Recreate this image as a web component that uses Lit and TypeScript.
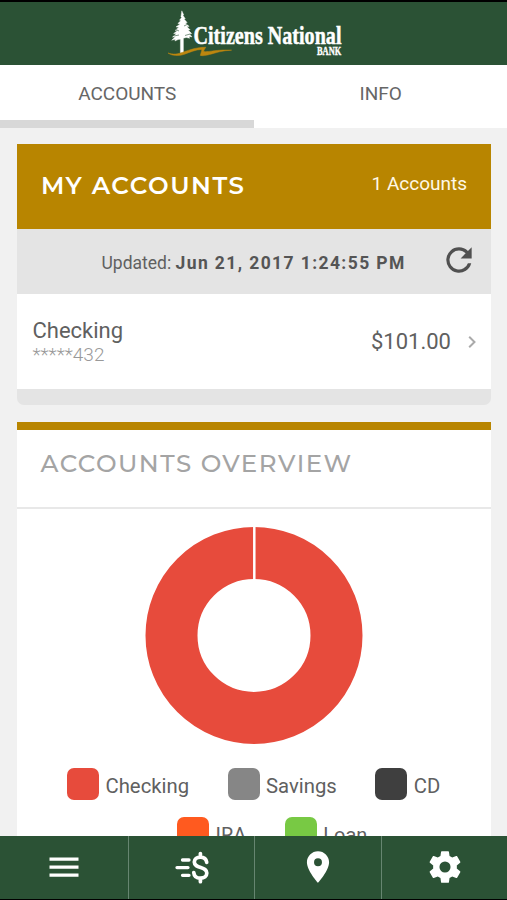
import { LitElement, html, css, svg } from "lit";
import { customElement } from "lit/decorators.js";
import { styleMap } from "lit/directives/style-map.js";

const LEGEND = [
  [
    { label: "Checking", color: "#e74b3c" },
    { label: "Savings", color: "#868686" },
    { label: "CD", color: "#3f3f3f" },
  ],
  [
    { label: "IRA", color: "#ff5a1f" },
    { label: "Loan", color: "#78c944" },
  ],
];

@customElement("bank-header")
class BankHeader extends LitElement {
  static styles = css`
    :host { display: block; height: 63px; border-top: 2px solid #000; background: #2b5235; }
    .logo { display: block; width: 190px; height: 62px; margin-left: 160px; }
    .name { font: bold 26px "Liberation Serif", serif; fill: #fff; stroke: #fff; stroke-width: 0.5px; }
    .bank { font: bold 12px "Liberation Serif", serif; fill: #fff; stroke: #fff; stroke-width: 0.4px; }
  `;
  render() {
    return html`<svg class="logo" viewBox="160 2 190 62">
      <path fill="#fff" stroke="#fff" stroke-width=".4" stroke-linejoin="round" d="M181.800 10.800l1.900 4-.8.4 2.400 3.600-1.300.2 3.200 3.600-1.700.3 3.700 3.500-2.300.2 3.300 3.300-2 .2 3.500 3.500-2.200.3 2.500 3-3-.5.600 1.900-3.300-.8-2.900.7v14.600h-3V39.200l-2.300.4-3.200 1.400.4-1.800-3.600 1 3.300-3.200-2.500.1 3.800-3.400-2.700-.1 4-3.100-2.500-.2 3.900-3-3-.4 4.100-2.900-2.300-.5 3.200-3-1.500-.3 2.300-3-.9-.2z"/>
      <path fill="none" stroke="#2b5235" stroke-width=".6" d="M175 29l4 2M188 24l-4 2M174 36l5-1M190 34l-5 1.500"/>
      <path fill="#bd860f" stroke="#bd860f" stroke-width=".5" d="M168 53c5 1.900 10 1.100 15-.8 7-2.500 14-5.100 22.800-5-1 1.700-2 3-2.200 4.400 6 .6 13-2.300 28-1.400-9 .2-16 2.700-22 4.300-4 1.100-7 1.500-9.300.9.500-2.400 1.700-4.700 1.300-6-6 .3-11.600 2.700-17 4.800-6 2.100-12.500 1.700-16.600-1.200z"/>
      <text class="name" x="193.500" y="43.500" textLength="148" lengthAdjust="spacingAndGlyphs">Citizens National</text>
      <text class="bank" x="317" y="55" textLength="24.300" lengthAdjust="spacingAndGlyphs">BANK</text>
    </svg>`;
  }
}

@customElement("section-tabs")
class SectionTabs extends LitElement {
  static styles = css`
    :host { display: flex; height: 63px; background: #fff; }
    .tab { flex: 1; box-sizing: border-box; text-align: center; padding: 17px 0 0 1px; line-height: 23px; font-size: 19px; color: #666; border-bottom: 8px solid transparent; }
    .active { border-bottom-color: #d8d8d8; }
  `;
  render() {
    return html`<div class="tab active">ACCOUNTS</div><div class="tab">INFO</div>`;
  }
}

@customElement("accounts-card")
class AccountsCard extends LitElement {
  static styles = css`
    :host { display: block; color: #606060; }
    .head { display: flex; justify-content: space-between; height: 85px; box-sizing: border-box; padding: 25px 24px 0 24px; background: #b88500; color: #fff; }
    .title { font: 600 24.500px/32px Montserrat, Lato, sans-serif; letter-spacing: 1.550px; }
    .count { font-size: 19px; line-height: 30px; color: #fff8e6; }
    .updated { display: flex; align-items: center; height: 65px; box-sizing: border-box; padding: 2px 15px 0 84.500px; background: #e4e4e4; font-size: 17.500px; white-space: pre; }
    .date { letter-spacing: 1.400px; color: #555; }
    .refresh { width: 38px; height: 38px; margin: -6px -2px 0 auto; fill: #505050; }
    .row { display: flex; align-items: center; height: 95px; box-sizing: border-box; padding: 0 14px 0 15.500px; background: #fff; }
    .name { font-size: 22px; line-height: 26px; padding-top: 1px; }
    .number { font-size: 19px; font-weight: 300; line-height: 22px; color: #999; }
    .amount { margin-left: auto; font-size: 22px; line-height: 26px; }
    .chevron { width: 8px; height: 14px; margin: 0 1px 0 17px; fill: none; stroke: #aaa; stroke-width: 2; }
    .foot { height: 16px; background: #e4e4e4; border-radius: 0 0 7px 7px; }
  `;
  render() {
    return html`
      <div class="head"><div class="title">MY ACCOUNTS</div><div class="count">1 Accounts</div></div>
      <div class="updated">
        <span>Updated: </span><b class="date">Jun 21, 2017 1:24:55 PM</b>
        <svg class="refresh" viewBox="0 0 24 24"><path d="M17.650 6.350A7.958 7.958 0 0 0 12 4a8 8 0 1 0 7.730 10h-2.080A6 6 0 1 1 12 6c1.660 0 3.140.69 4.220 1.780L13 11h7V4z"/></svg>
      </div>
      <div class="row">
        <div><div class="name">Checking</div><div class="number">*****432</div></div>
        <div class="amount">$101.00</div>
        <svg class="chevron" viewBox="0 0 8 14"><path d="M1.200 1.700L6.500 7l-5.300 5.300"/></svg>
      </div>
      <div class="foot"></div>`;
  }
}

@customElement("overview-card")
class OverviewCard extends LitElement {
  static styles = css`
    :host { display: block; border-top: 8px solid #b88500; background: #fff; color: #606060; }
    .title { height: 79px; box-sizing: border-box; padding: 17px 23.500px 0; font: 500 24.500px/32px Montserrat, Lato, sans-serif; letter-spacing: 1.500px; color: #a4a4a4; border-bottom: 2px solid #e8e8e8; }
    .donut { display: block; width: 218px; height: 218px; margin: 17px auto 24px; }
    .line { display: flex; height: 32px; margin-bottom: 17px; }
    .line.first { padding-left: 50px; }
    .line.second { padding-left: 160px; }
    .item { display: flex; align-items: center; gap: 6.500px; font-size: 20.300px; line-height: 24px; margin-right: 38.500px; }
    .second .item { font-size: 20px; margin-right: 38.500px; }
    .label { padding-top: 4px; }
    .swatch { width: 32px; height: 32px; border-radius: 7px; }
  `;
  render() {
    return html`
      <div class="title">ACCOUNTS OVERVIEW</div>
      <svg class="donut" viewBox="0 0 218 218">
        ${svg`<circle cx="109" cy="109.400" r="82.500" fill="none" stroke="#e74b3c" stroke-width="52"/><path d="M109.300 0v54" stroke="#fff" stroke-width="2.500"/>`}
      </svg>
      ${LEGEND.map((items, i) => html`<div class="line ${i ? "second" : "first"}">
        ${items.map((it) => html`<div class="item"><span class="swatch" style=${styleMap({ background: it.color })}></span><span class="label">${it.label}</span></div>`)}
      </div>`)}`;
  }
}

@customElement("bottom-nav")
class BottomNav extends LitElement {
  static styles = css`
    :host { display: grid; grid-template-columns: 129px 126px 127px 1fr; height: 63px; background: #2b5235; border-bottom: 1px solid #000; }
    .cell { display: flex; align-items: center; justify-content: center; border-right: 1px solid #668570; padding-bottom: 1px; }
    .cell:last-child { border-right: 0; }
    svg { width: 38px; height: 38px; fill: #fff; }
    .line { fill: none; stroke: #fff; stroke-linecap: round; stroke-width: 3.300; }
    .dollar { stroke-width: 3.700; }
  `;
  render() {
    return html`
      <div class="cell"><svg viewBox="0 0 38 38"><path d="M4.500 9.500h29v3.200h-29zM4.500 17.500h29v3.200h-29zM4.500 25.500h29v3.200h-29z"/></svg></div>
      <div class="cell"><svg viewBox="0 0 38 38"><path class="line" d="M9.500 12h6.500M4 19.600h11M9.500 27.300h6.500"/><path class="line dollar" d="M33.700 14.300c-.5-3.500-3-5.200-6.300-5.200-3.600 0-6.100 1.900-6.100 4.900 0 3.400 3 4.400 6.400 5.500 3.500 1.200 6.100 2.200 6.100 5.600 0 3.200-2.600 5.100-6.300 5.100-3.800 0-6.400-2-6.700-5.600M27.400 5.600v3.500M27.400 30.200v3.500"/></svg></div>
      <div class="cell"><svg viewBox="0 0 24 24"><path d="M12 2C8.130 2 5 5.130 5 9c0 5.250 7 13 7 13s7-7.750 7-13c0-3.870-3.130-7-7-7zm0 9.500a2.500 2.500 0 0 1 0-5 2.500 2.500 0 0 1 0 5z"/></svg></div>
      <div class="cell"><svg viewBox="0 0 24 24"><path d="M19.430 12.980c.04-.32.07-.64.07-.98s-.03-.66-.07-.98l2.110-1.650c.19-.15.24-.42.12-.64l-2-3.460c-.12-.22-.39-.3-.61-.22l-2.490 1c-.52-.4-1.080-.73-1.690-.98l-.38-2.650A.488.488 0 0 0 14 2h-4c-.25 0-.46.18-.49.42l-.38 2.650c-.61.25-1.170.59-1.690.98l-2.490-1c-.23-.09-.49 0-.61.22l-2 3.460c-.13.22-.07.49.12.64l2.110 1.650c-.04.32-.07.65-.07.98s.03.66.07.98l-2.110 1.650c-.19.15-.24.42-.12.64l2 3.460c.12.22.39.3.61.22l2.490-1c.52.4 1.080.73 1.690.98l.38 2.650c.03.24.24.42.49.42h4c.25 0 .46-.18.49-.42l.38-2.650c.61-.25 1.170-.59 1.690-.98l2.490 1c.23.09.49 0 .61-.22l2-3.460c.12-.22.07-.49-.12-.64l-2.110-1.650zM12 15.500a3.500 3.500 0 1 1 0-7 3.500 3.500 0 0 1 0 7z"/></svg></div>`;
  }
}

@customElement("app-root")
class AppRoot extends LitElement {
  static styles = css`
    :host { display: flex; flex-direction: column; width: 507px; height: 900px; overflow: hidden; background: #f1f1f1; font-family: Roboto, sans-serif; }
    .content { flex: 1; min-height: 0; overflow: hidden; padding: 16px 16px 0 17px; }
    .overview { margin-top: 17px; }
  `;
  render() {
    return html`
      <bank-header></bank-header>
      <section-tabs></section-tabs>
      <div class="content">
        <accounts-card></accounts-card>
        <overview-card class="overview"></overview-card>
      </div>
      <bottom-nav></bottom-nav>`;
  }
}
